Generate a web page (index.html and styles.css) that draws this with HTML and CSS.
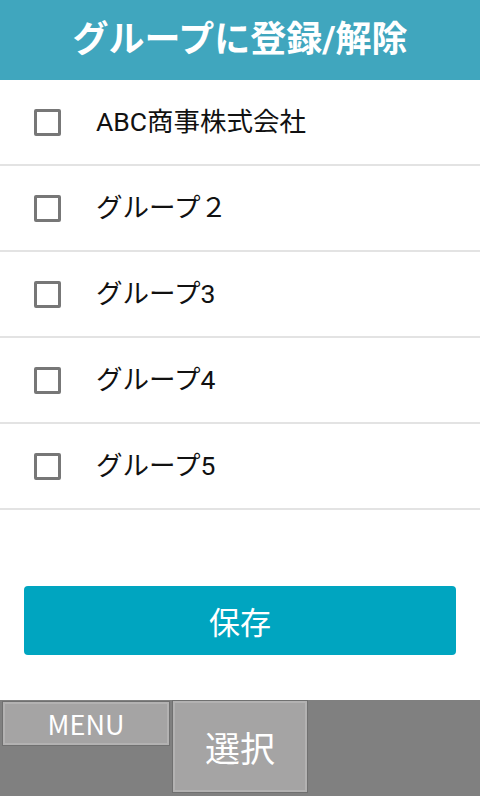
FILE: index.html
```html
<!DOCTYPE html>
<html lang="ja">
<head>
<meta charset="utf-8">
<title>グループに登録/解除</title>
<link rel="stylesheet" href="styles.css">
</head>
<body>
<div class="screen">
  <header class="header">
    <h1 class="title">グループに登録/解除</h1>
  </header>
  <ul class="group-list">
    <li class="group-row"><span class="check"></span><span class="label">ABC商事株式会社</span></li>
    <li class="group-row"><span class="check"></span><span class="label">グループ２</span></li>
    <li class="group-row"><span class="check"></span><span class="label">グループ3</span></li>
    <li class="group-row"><span class="check"></span><span class="label">グループ4</span></li>
    <li class="group-row"><span class="check"></span><span class="label">グループ5</span></li>
  </ul>
  <div class="actions">
    <button class="save-btn">保存</button>
  </div>
  <footer class="softkeys">
    <div class="key key-menu">MENU</div>
    <div class="key key-select">選択</div>
  </footer>
</div>
</body>
</html>
```

FILE: styles.css
```css
* { box-sizing: border-box; }
html, body { margin: 0; padding: 0; }
body {
  width: 480px;
  height: 796px;
  overflow: hidden;
  background: #ffffff;
  font-family: Roboto, "Noto Sans CJK JP", sans-serif;
}
.screen {
  display: flex;
  flex-direction: column;
  height: 796px;
}
.header {
  height: 80px;
  background: #40a6be;
  display: flex;
  align-items: center;
  justify-content: center;
}
.title {
  margin: 0;
  color: #ffffff;
  font-size: 36px;
  font-weight: 700;
  line-height: 1;
}
.group-list {
  list-style: none;
  margin: 0;
  padding: 0;
}
.group-row {
  height: 86px;
  border-bottom: 2px solid #e3e3e3;
  display: flex;
  align-items: center;
  padding-left: 34px;
}
.check {
  width: 27px;
  height: 27px;
  border: 3px solid #777777;
  border-radius: 2px;
  flex: none;
}
.label {
  margin-left: 35px;
  padding-bottom: 0;
  font-size: 26.5px;
  line-height: 1;
  color: #111111;
}
.actions {
  padding: 76px 24px 0;
}
.save-btn {
  display: block;
  width: 100%;
  height: 69px;
  border: none;
  border-radius: 4px;
  background: #00a5c0;
  color: #ffffff;
  font-family: "Noto Sans CJK JP", sans-serif;
  font-size: 31px;
  padding: 0;
}
.softkeys {
  margin-top: auto;
  height: 96px;
  background: #808080;
  display: flex;
  align-items: flex-start;
  gap: 4px;
  padding: 2px 0 0 3px;
}
.key {
  background: #a5a4a4;
  border: 2px solid #b3b2b2;
  box-shadow: 0 0 0 1px #707070;
  color: #ffffff;
  font-family: "Noto Sans CJK JP", sans-serif;
  display: flex;
  align-items: center;
  justify-content: center;
}
.key-menu {
  width: 166px;
  height: 43px;
  font-size: 27px;
}
.key-select {
  width: 134px;
  height: 91px;
  margin-top: -1px;
  font-size: 35px;
}
```
